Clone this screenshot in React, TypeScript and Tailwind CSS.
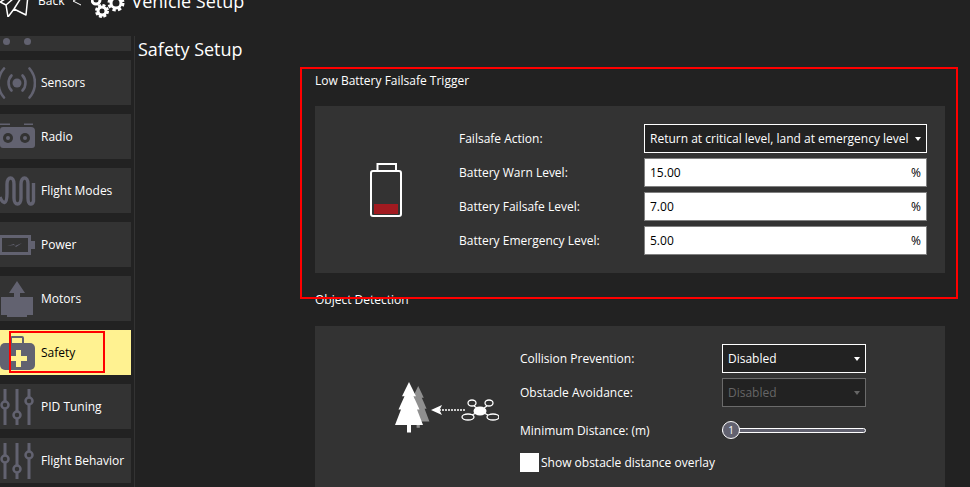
const font = { fontFamily: '"Open Sans", sans-serif' }

const SensorsIcon = () => (
  <svg width="36" height="32" viewBox="0 0 36 32" fill="none" stroke="#626270" strokeWidth="2.6" strokeLinecap="round">
    <circle cx="17" cy="16" r="4.5" fill="#626270" stroke="none" />
    <path d="M11.5 8.5a11 11 0 0 0 0 15M22.5 8.5a11 11 0 0 1 0 15" />
    <path d="M4 1.5a22 22 0 0 0 0 29M29.5 1.5a22 22 0 0 1 0 29" />
  </svg>
)

const RadioIcon = () => (
  <svg width="36" height="28" viewBox="0 0 36 28">
    <path d="M0 0.5h10v1.5H0zM24 0.5h9v1.5h-9z" fill="#626270" />
    <path d="M3 4h28a4 4 0 0 1 4 4v14a3 3 0 0 1-3 3H3a3 3 0 0 1-3-3V7a3 3 0 0 1 3-3z" fill="#626270" />
    <circle cx="8" cy="15" r="5" fill="#333333" />
    <circle cx="8" cy="15" r="2" fill="#626270" />
    <circle cx="25" cy="15" r="5" fill="#333333" />
    <circle cx="25" cy="15" r="2" fill="#626270" />
  </svg>
)

const ModesIcon = () => (
  <svg width="36" height="30" viewBox="0 0 36 30" fill="none" stroke="#626270" strokeWidth="3.4" strokeLinecap="butt">
    <path d="M0 21c3 8 7 8 7-4V8c0-8 7-8 7 0v14c0 8 7 8 7 0V8c0-8 7-8 7 0v14c0 8 4.500 7 5.500 3V7" />
  </svg>
)

const PowerIcon = () => (
  <svg width="36" height="20" viewBox="0 0 36 20">
    <path d="M0 0h31v6h4v8h-4v6H0zM2 3v14h26V3z" fill="#626270" fillRule="evenodd" />
    <path d="M7 11l7-2 1 2 7-3-6 4-2-2z" fill="#626270" />
  </svg>
)

const MotorsIcon = () => (
  <svg width="34" height="36" viewBox="0 0 34 36">
    <path d="M17 0l8 12h-5v4h13v18H27v2H7v-2H1V16h13v-4H9z" fill="#626270" />
  </svg>
)

const SafetyIcon = () => (
  <svg width="35" height="36" viewBox="0 0 35 36">
    <path d="M10 9V3a2 2 0 0 1 2-2h10a2 2 0 0 1 2 2v6h-2V3H12v6z" fill="#626270" />
    <rect x="0" y="8" width="35" height="27" rx="5" fill="#626270" />
    <path d="M16 15h5v6h6v5h-6v6h-5v-6h-6v-5h6z" fill="#fff291" />
  </svg>
)

const SlidersIcon = () => (
  <svg width="34" height="36" viewBox="0 0 34 36" fill="none" stroke="#626270">
    <path d="M5 0v12M5 20v16M17 0v22M17 30v6M29 0v8M29 16v20" strokeWidth="3" />
    <circle cx="5" cy="16" r="3.500" strokeWidth="2.500" />
    <circle cx="17" cy="26" r="3.500" strokeWidth="2.500" />
    <circle cx="29" cy="12" r="3.500" strokeWidth="2.500" />
  </svg>
)

const BatteryIcon = () => (
  <svg width="35" height="56" viewBox="0 0 35 56" fill="none">
    <path d="M8.500 9V2H27v7" stroke="white" strokeWidth="2" />
    <rect x="2" y="9" width="30" height="45" rx="2" stroke="white" strokeWidth="2" />
    <rect x="5" y="42" width="24" height="10" fill="#a11a20" />
  </svg>
)

const treePath = 'M14 0l7 13h-2.500l6 12H22l6 14H16v7h-4v-7H0l6-14H3.500l6-12H7z'

const TreesDroneIcon = () => (
  <svg width="104" height="54" viewBox="0 0 104 54">
    <path transform="translate(12 7) scale(0.8 0.91)" d={treePath} fill="#8f8f8f" />
    <path transform="translate(0 3) scale(1 1.1)" d={treePath} fill="white" />
    <path d="M36 31l11-5-2.500 5 2.500 5z" fill="white" />
    <path d="M44 31h26" stroke="white" strokeWidth="1.500" strokeDasharray="2 1" />
    <ellipse cx="85" cy="32" rx="6.500" ry="4.500" fill="white" />
    <g fill="none" stroke="white" strokeWidth="1.300">
      <ellipse cx="77" cy="24" rx="4" ry="3" />
      <ellipse cx="94" cy="24" rx="4" ry="3" />
      <ellipse cx="73" cy="38" rx="6" ry="3" />
      <ellipse cx="98" cy="38" rx="6" ry="3" />
      <path d="M79 27l3 2M92 27l-3 2M77 36l4-2M93 36l-4-2" />
    </g>
  </svg>
)

const Caret = ({ color = 'border-t-white' }: { color?: string }) => (
  <span className={`ml-auto h-0 w-0 border-x-[3px] border-t-[4px] border-x-transparent ${color}`} />
)

const Label = ({ children }: { children: string }) => (
  <div className='flex h-[29px] items-center text-[12px] text-white'>{children}</div>
)

const NumberField = ({ value }: { value: string }) => (
  <div className='flex h-[29px] items-center border border-[#808080] bg-white px-[5px] text-[12px] text-black'>
    <span>{value}</span>
    <span className='ml-auto'>%</span>
  </div>
)

const navItems = [
  { label: 'Sensors', icon: <SensorsIcon /> },
  { label: 'Radio', icon: <RadioIcon /> },
  { label: 'Flight Modes', icon: <ModesIcon /> },
  { label: 'Power', icon: <PowerIcon /> },
  { label: 'Motors', icon: <MotorsIcon /> },
  { label: 'Safety', icon: <SafetyIcon />, active: true },
  { label: 'PID Tuning', icon: <SlidersIcon /> },
  { label: 'Flight Behavior', icon: <SlidersIcon /> },
]

export default function App() {
  return (
    <div className='relative h-[487px] w-[970px] overflow-hidden bg-[#222222] text-white' style={font}>
      {/* top bar, scrolled partly off the page */}
      <div className='flex h-[36px] items-start'>
        <div className='-mt-[15px] flex h-[32px] items-center'>
          <svg width="30" height="32" viewBox="0 0 30 32" fill="none" stroke="white" strokeWidth="1.500" strokeLinejoin="round">
            <path d="M0 17L29 0l-3 30-12-6-6 8-2-12zM6 20L29 0 14 24" fill="#222222" />
          </svg>
          <span className='-mt-[1px] ml-[8px] text-[12px]'>Back</span>
          <svg className='ml-[8px]' width="10" height="12" viewBox="0 0 10 12" fill="none" stroke="white" strokeWidth="1">
            <path d="M9 2L1 6l8 4" />
          </svg>
        </div>
        <div className='-mt-[16px] ml-[9px] flex items-center'>
          <svg width="34" height="34" viewBox="0 0 34 34" fill="white">
            <circle cx="5" cy="16" r="4" fill="none" stroke="white" strokeWidth="3" />
            <circle cx="11" cy="27" r="5" fill="none" stroke="white" strokeWidth="4" strokeDasharray="2.500 1.400" />
            <circle cx="11" cy="27" r="4" fill="none" stroke="white" strokeWidth="3" />
            <circle cx="25" cy="19" r="6.500" fill="none" stroke="white" strokeWidth="4" strokeDasharray="3 2.100" />
            <circle cx="25" cy="19" r="5" fill="none" stroke="white" strokeWidth="3" />
          </svg>
          <span className='ml-[6px] text-[18px] leading-[34px] text-white'>Vehicle Setup</span>
        </div>
      </div>

      <div className='flex'>
        {/* sidebar */}
        <div className='h-[451px] w-[135px] shrink-0 border-r border-[#333333] pr-[3px]'>
          <div className='mb-[9px] flex h-[15px] w-[131px] items-start gap-[14px] bg-[#333333] pl-[3px] pt-[2px]'>
            <span className='h-[7px] w-[7px] rounded-full bg-[#626270]' />
            <span className='h-[7px] w-[7px] rounded-full bg-[#626270]' />
          </div>
          <div className='flex flex-col gap-[9px]'>
            {navItems.map((item) => (
              <div
                key={item.label}
                className={`flex h-[45px] w-[131px] items-center text-[12px] ${item.active ? 'bg-[#fff291] text-black' : 'bg-[#333333] text-white'}`}
              >
                <div className='flex w-[41px] shrink-0 items-center pl-0'>{item.icon}</div>
                <span className='whitespace-nowrap'>{item.label}</span>
              </div>
            ))}
          </div>
        </div>

        {/* content */}
        <div className='min-w-0 flex-1'>
          <div className='ml-[3px] h-[26px] text-[18px] leading-[26px]'>Safety Setup</div>
          <div className='ml-[180px] w-[630px]'>
            <div className='mt-[9px] h-[19px] text-[12px] leading-[19px]'>Low Battery Failsafe Trigger</div>
            <div className='mt-[16px] flex h-[167px] bg-[#333333] pt-[18px]'>
              <div className='flex h-[131px] w-[144px] shrink-0 items-center pl-[54px]'>
                <BatteryIcon />
              </div>
              <div className='flex w-[185px] shrink-0 flex-col gap-[5px]'>
                <Label>Failsafe Action:</Label>
                <Label>Battery Warn Level:</Label>
                <Label>Battery Failsafe Level:</Label>
                <Label>Battery Emergency Level:</Label>
              </div>
              <div className='flex w-[283px] shrink-0 flex-col gap-[5px]'>
                <div className='flex h-[29px] items-center border border-white bg-[#222222] pl-[5px] pr-[5px] text-[12px] whitespace-nowrap'>
                  <span>Return at critical level, land at emergency level</span>
                  <Caret />
                </div>
                <NumberField value='15.00' />
                <NumberField value='7.00' />
                <NumberField value='5.00' />
              </div>
            </div>

            <div className='mt-[17px] h-[19px] text-[12px] leading-[19px]'>Object Detection</div>
            <div className='mt-[17px] flex h-[200px] bg-[#333333] pt-[18px]'>
              <div className='flex h-[124px] w-[205px] shrink-0 items-center justify-start pl-[80px]'>
                <TreesDroneIcon />
              </div>
              <div className='w-[345px] shrink-0'>
                <div className='flex'>
                  <div className='flex w-[202px] shrink-0 flex-col gap-[5px]'>
                    <Label>Collision Prevention:</Label>
                    <Label>Obstacle Avoidance:</Label>
                    <div className='mt-[4px]'>
                      <Label>Minimum Distance: (m)</Label>
                    </div>
                  </div>
                  <div className='flex w-[144px] shrink-0 flex-col gap-[5px]'>
                    <div className='flex h-[29px] items-center border border-white bg-[#222222] pl-[5px] pr-[5px] text-[12px]'>
                      <span>Disabled</span>
                      <Caret />
                    </div>
                    <div className='flex h-[29px] items-center border border-[#6b6b6b] bg-[#222222] pl-[5px] pr-[5px] text-[12px] text-[#666666]'>
                      <span>Disabled</span>
                      <Caret color='border-t-[#666666]' />
                    </div>
                    <div className='relative mt-[4px] flex h-[29px] items-center'>
                      <div className='h-[5px] w-full rounded-full border border-white bg-[#626270]' />
                      <div className='absolute left-0 top-[5px] flex h-[18px] w-[18px] items-center justify-center rounded-full border border-white bg-[#626270] text-[10px] leading-none'>1</div>
                    </div>
                  </div>
                </div>
                <div className='mt-[8px] flex items-center gap-[2px]'>
                  <span className='h-[19px] w-[19px] bg-white' />
                  <span className='text-[12px]'>Show obstacle distance overlay</span>
                </div>
              </div>
            </div>
          </div>
        </div>
      </div>

      {/* annotation boxes */}
      <div className='absolute left-[300px] top-[67px] h-[232px] w-[658px] border-2 border-[#ff0000]' />
      <div className='absolute left-[9px] top-[331px] h-[42px] w-[96px] border-2 border-[#ff0000]' />
    </div>
  )
}
